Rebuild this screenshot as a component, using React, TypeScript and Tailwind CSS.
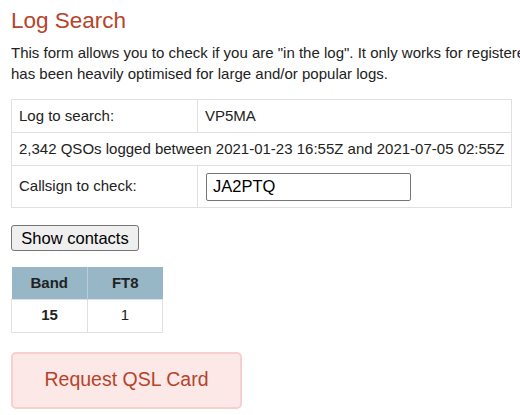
import React from "react";

export default function App() {
  return (
    <div className="w-[520px] h-[415px] overflow-hidden bg-white px-[11px] pt-[6px] text-[#222]" style={{ fontFamily: '"Liberation Sans", Arial, sans-serif' }}>
      <h1 className="text-[22.5px] leading-[30px] text-[#b5442a] font-normal whitespace-nowrap">Log Search</h1>
      <p className="mt-[6px] text-[15px] leading-[21px] whitespace-nowrap">
        This form allows you to check if you are "in the log". It only works for registered logs and
        <br />
        has been heavily optimised for large and/or popular logs.
      </p>
      <table className="mt-[15px] w-[500px] border-collapse text-[15px] border border-[#e0e0e0]">
        <tbody>
          <tr className="h-[33px]">
            <td className="w-[186px] border border-[#e0e0e0] px-[7px]">Log to search:</td>
            <td className="border border-[#e0e0e0] px-[7px]">VP5MA</td>
          </tr>
          <tr className="h-[33px]">
            <td colSpan={2} className="border border-[#e0e0e0] px-[7px] whitespace-nowrap">
              2,342 QSOs logged between 2021-01-23 16:55Z and 2021-07-05 02:55Z
            </td>
          </tr>
          <tr className="h-[42px]">
            <td className="border border-[#e0e0e0] px-[7px]">Callsign to check:</td>
            <td className="border border-[#e0e0e0] px-[8px]">
              <input
                defaultValue="JA2PTQ"
                className="w-[205px] h-[28px] border border-[#767676] rounded-[2px] px-[6px] text-[16.5px] text-black outline-none"
                style={{ fontFamily: '"Liberation Sans", Arial, sans-serif' }}
              />
            </td>
          </tr>
        </tbody>
      </table>
      <button className="mt-[17px] block h-[26px] w-[128px] border border-[#767676] rounded-[3px] bg-[#efefef] text-[16.5px] leading-[20px] text-black">
        Show contacts
      </button>
      <table className="mt-[16px] w-[152px] border-collapse text-[15px]">
        <thead>
          <tr className="h-[32px] bg-[#97b6c6]">
            <th className="w-[76px] border-r border-[#b8cdd8] font-bold">Band</th>
            <th className="font-bold">FT8</th>
          </tr>
        </thead>
        <tbody>
          <tr className="h-[33px]">
            <td className="border border-[#e0e0e0] text-center font-bold">15</td>
            <td className="border border-[#e0e0e0] text-center">1</td>
          </tr>
        </tbody>
      </table>
      <button className="mt-[19px] block h-[57px] w-[231px] rounded-[5px] border-[2px] border-[#f7cfcf] bg-[#fde8e8] text-[19.5px] text-[#b5442a]">
        Request QSL Card
      </button>
    </div>
  );
}
